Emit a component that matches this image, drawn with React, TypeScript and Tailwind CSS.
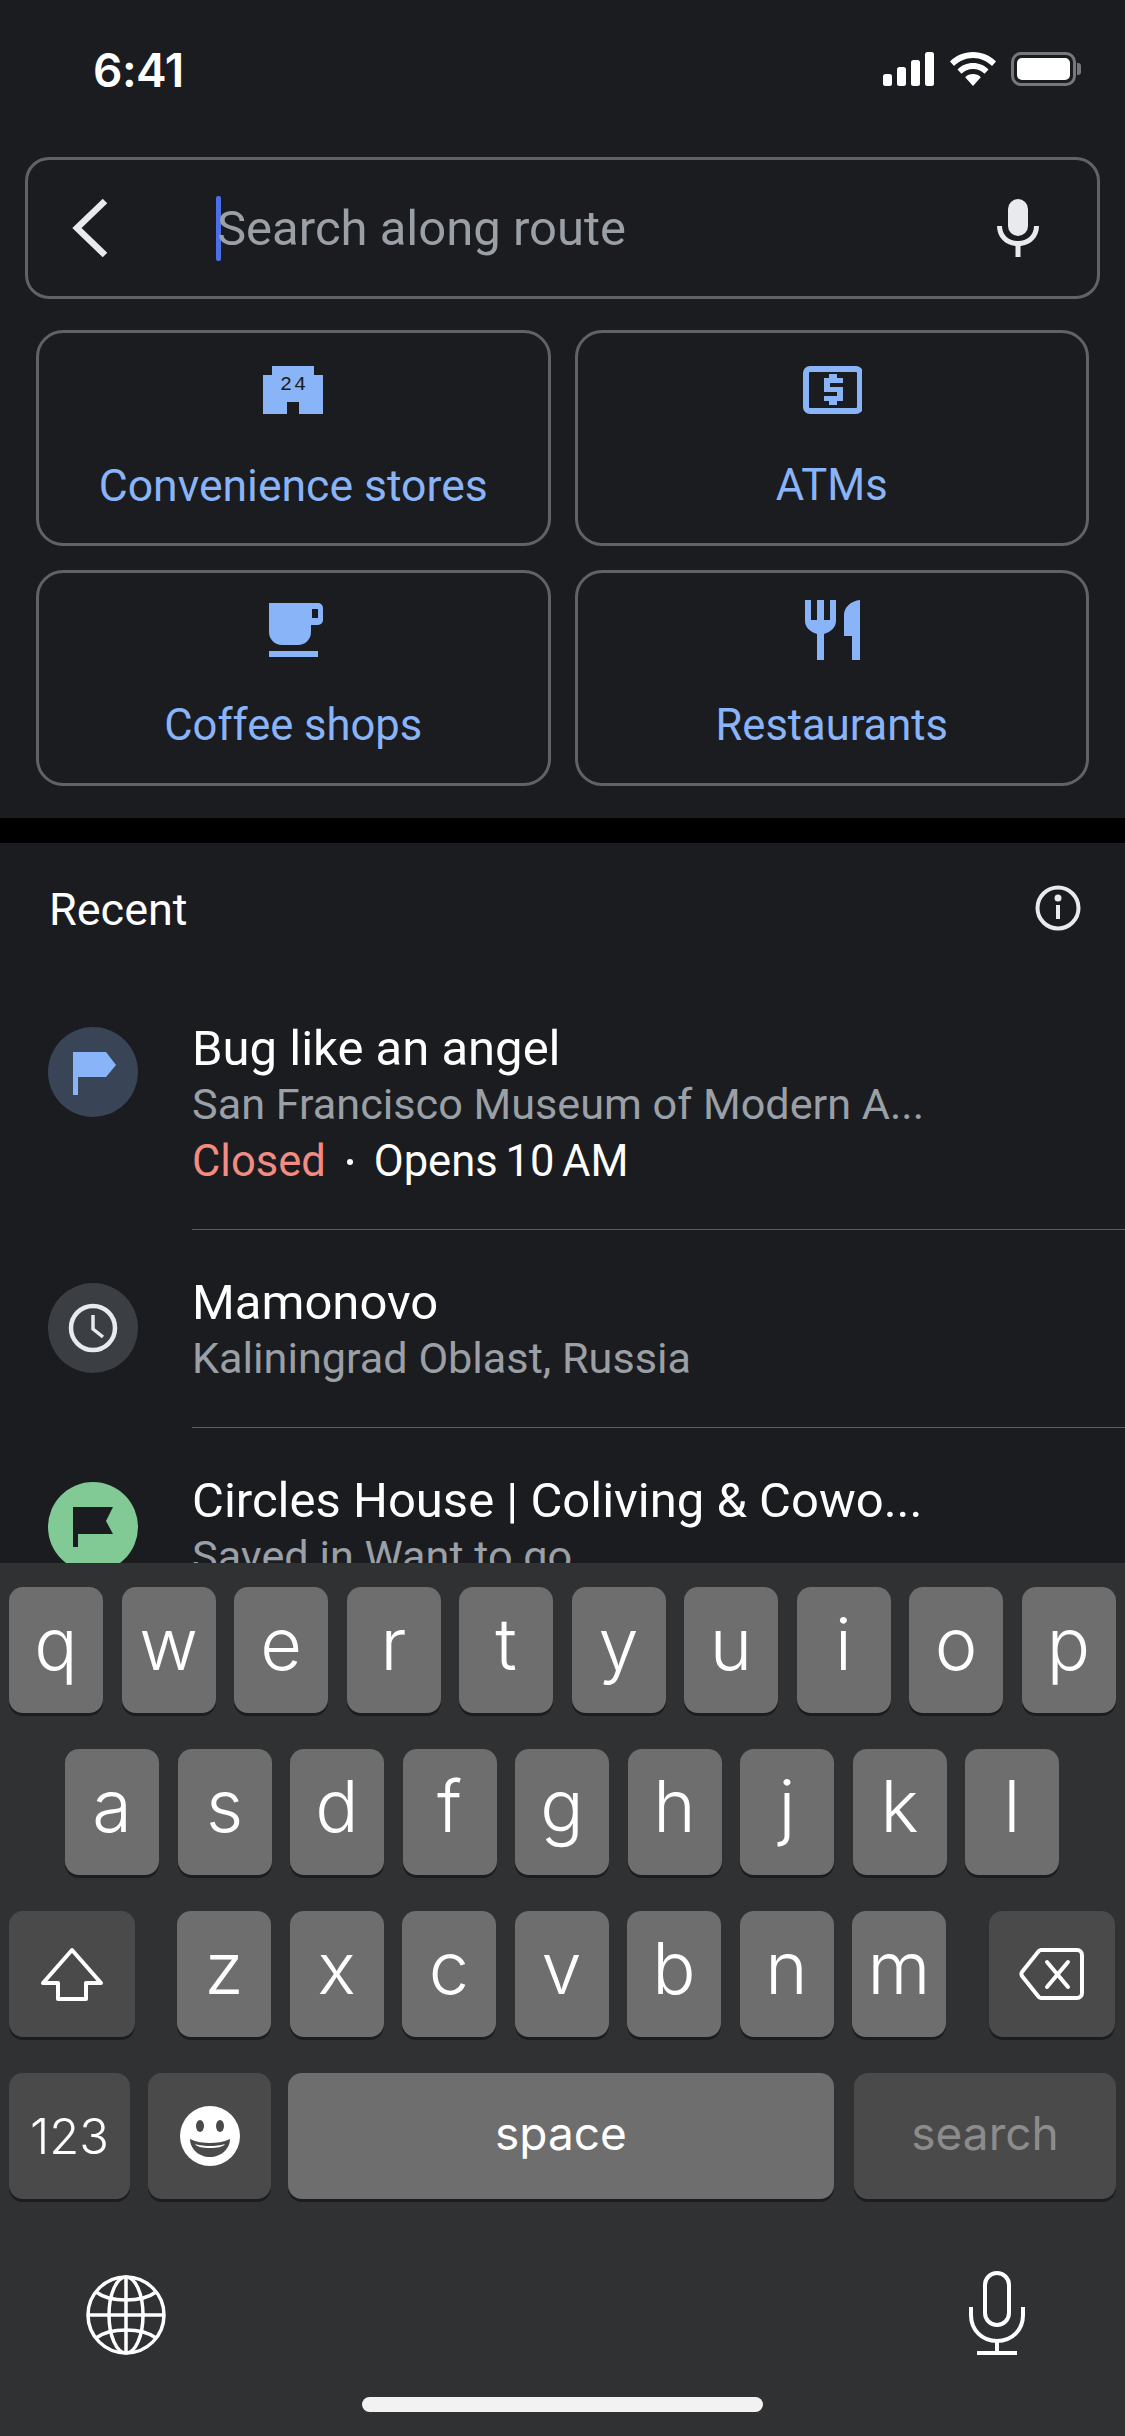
import React from "react";

const Key = ({ c, w = "w-[94px]", dark = false, children }: { c?: string; w?: string; dark?: boolean; children?: React.ReactNode }) => (
  <div className={`${w} h-[126px] shrink-0 rounded-[14px] flex items-center justify-center text-white shadow-[0_3px_0_#1d1d1f] ${dark ? "bg-[#4a4a4a]" : "bg-[#6e6e6e]"}`}>
    {c ? <span className="text-[72px] font-light leading-none pb-[12px]">{c}</span> : children}
  </div>
);

const Chip = ({ label, wide, children }: { label: string; wide?: boolean; children: React.ReactNode }) => (
  <div className="h-[216px] rounded-[27px] border-[3px] border-[#5f6368] flex flex-col items-center pt-[27px]">
    {children}
    <div className={`mt-[42px] leading-[48px] text-[#8ab4f8] font-['Roboto',sans-serif] ${wide ? "text-[44.500px]" : "text-[43.500px]"}`}>{label}</div>
  </div>
);

const Item = ({ icon, mt, pt, pb, last, children }: { icon: React.ReactNode; mt: string; pt: string; pb: string; last?: boolean; children: React.ReactNode }) => (
  <div className="flex">
    <div className={`w-[192px] shrink-0 pl-[48px] ${pt}`}>
      <div className={mt}>{icon}</div>
    </div>
    <div className={`flex-1 ${pt} ${pb} ${last ? "" : "border-b-[1.5px] border-[#5a5c60]"}`}>{children}</div>
  </div>
);

const Title = ({ t }: { t: string }) => <div className="text-[49px] leading-[56px] text-white">{t}</div>;
const Sub = ({ t }: { t: string }) => <div className="text-[43.200px] leading-[56px] text-[#9aa0a6]">{t}</div>;

export default function App() {
  return (
    <div className="w-[1125px] h-[2436px] overflow-hidden flex flex-col bg-black font-['Roboto',sans-serif]">
      <div className="h-[818px] shrink-0 bg-[#1b1c20]">
        <div className="h-[157px] flex items-start justify-between pt-[44px] pl-[93px] pr-[44px]">
          <span className="text-white text-[46px] leading-[52px] font-semibold font-['Inter',sans-serif] tracking-[-0.5px]">6:41</span>
          <div className="flex items-center gap-[15px] pt-[8px]">
            <svg width="52" height="34" viewBox="0 0 52 34" fill="#fff">
              <rect x="0" y="22" width="9" height="12" rx="2.500" />
              <rect x="14" y="15" width="9" height="19" rx="2.500" />
              <rect x="28" y="8" width="9" height="26" rx="2.500" />
              <rect x="42" y="0" width="9" height="34" rx="2.500" />
            </svg>
            <svg width="46" height="34" viewBox="0 0 46 34" fill="#fff">
              <path d="M23 0C14 0 6 3.500 0 9.500l4 4.500C9 9 15.600 6 23 6s14 3 19 8l4-4.500C40 3.500 32 0 23 0z" />
              <path d="M23 11c-6 0-11.500 2.400-15.500 6.400l4 4.400C14.500 19 18.500 17 23 17s8.500 2 11.500 4.800l4-4.400C34.500 13.400 29 11 23 11z" />
              <path d="M23 22c-3 0-5.800 1.200-7.800 3.200L23 34l7.800-8.800C28.800 23.200 26 22 23 22z" />
            </svg>
            <div className="flex items-center">
              <div className="w-[65px] h-[34px] rounded-[10px] border-[3px] border-[#77787a] p-[3px]">
                <div className="w-full h-full bg-white rounded-[5px]" />
              </div>
              <div className="w-[4px] h-[12px] ml-[1px] rounded-r-[3px] bg-[#77787a]" />
            </div>
          </div>
        </div>

        <div className="mx-[25px] h-[142px] rounded-[24px] border-[3px] border-[#5f6368] flex items-center pl-[44px] pr-[58px]">
          <svg width="36" height="60" viewBox="0 0 36 60" fill="none" stroke="#e8eaed" strokeWidth="6.500">
            <path d="M33 3 5 30l28 27" />
          </svg>
          <div className="w-[5px] h-[65px] ml-[108px] bg-[#4a6fe8] rounded-[2px] shrink-0" />
          <div className="flex-1 text-[#9aa0a6] text-[49px] leading-[60px] -ml-[4px] pt-[2px]">Search along route</div>
          <svg width="42" height="58" viewBox="0 0 42 58" fill="#e8eaed">
            <rect x="11" y="0" width="20" height="37" rx="10" />
            <path d="M0 27h5c0 9 7 15 16 15s16-6 16-15h5c0 11-8 19-18.500 20v11h-5V47C8 46 0 38 0 27z" />
          </svg>
        </div>

        <div className="grid grid-cols-2 gap-x-[24px] gap-y-[24px] px-[36px] mt-[31px]">
          <Chip label="Convenience stores" wide>
            <svg width="60" height="60" viewBox="0 0 60 60">
              <path fill="#8ab4f8" d="M9 6h42v9h9v39H36V42H24v12H0V15h9z" />
              <text x="17" y="30" fontSize="20" fontFamily="Liberation Mono, monospace" letterSpacing="2" fill="#1b1c20">24</text>
            </svg>
          </Chip>
          <Chip label="ATMs">
            <svg width="60" height="60" viewBox="0 0 60 60">
              <rect x="4" y="9" width="54" height="42" rx="4" fill="none" stroke="#8ab4f8" strokeWidth="6" />
              <path fill="#8ab4f8" d="M27 14h8v4h6v5H28v4h13v14h-6v4h-8v-4h-5v-5h13v-4H22V18h5z" />
            </svg>
          </Chip>
          <Chip label="Coffee shops">
            <svg width="60" height="60" viewBox="0 0 60 60">
              <path fill="#8ab4f8" d="M6 3h49a5 5 0 0 1 5 5v12a5 5 0 0 1-5 5h-7v7a13 13 0 0 1-13 13H19A13 13 0 0 1 6 32z" />
              <rect x="49" y="9" width="6" height="9" fill="#1b1c20" />
              <rect x="6" y="51" width="49" height="6" fill="#8ab4f8" />
            </svg>
          </Chip>
          <Chip label="Restaurants">
            <svg width="60" height="60" viewBox="0 0 60 60">
              <path fill="#8ab4f8" d="M3 0h6v20h6V0h7v20h6V0h6v21c0 6-5 11-12 13v26h-7V34C8 32 3 27 3 21z" />
              <path fill="#8ab4f8" d="M58 0v60h-8V36h-8V15C42 7 49 1 58 0z" />
            </svg>
          </Chip>
        </div>
      </div>

      <div className="h-[25px] shrink-0 bg-black" />

      <div className="flex-1 min-h-0 overflow-hidden bg-[#1b1c20]">
        <div className="h-[134px] flex items-start justify-between pl-[49px] pr-[44px] pt-[39px]">
          <span className="text-white text-[45px] leading-[56px]">Recent</span>
          <svg width="46" height="46" viewBox="0 0 46 46" fill="none" stroke="#e8eaed" strokeWidth="4" className="mt-[3px]">
            <circle cx="23" cy="23" r="20.500" />
            <path d="M23 20v14" />
            <circle cx="23" cy="13" r="1.500" fill="#e8eaed" />
          </svg>
        </div>

        <Item
          pt="pt-[44px]"
          pb="pb-[39px]"
          mt="mt-[6px]"
          icon={
            <div className="w-[90px] h-[90px] rounded-full bg-[#394457] flex items-center justify-center">
              <svg width="46" height="46" viewBox="0 0 46 46" fill="#8ab4f8">
                <path d="M3 3h33l10 13-10 12H8v18H3z" />
              </svg>
            </div>
          }
        >
          <Title t="Bug like an angel" />
          <Sub t="San Francisco Museum of Modern A..." />
          <div className="text-[43.500px] leading-[56px] text-white flex items-center pt-[1px]">
            <span className="text-[#f28b82]">Closed</span>
            <span className="w-[6px] h-[6px] rounded-full bg-white mx-[21px]" />
            <span className="[word-spacing:-3px]">Opens 10 AM</span>
          </div>
        </Item>

        <Item
          pt="pt-[45px]"
          pb="pb-[40px]"
          mt="mt-[8px]"
          icon={
            <div className="w-[90px] h-[90px] rounded-full bg-[#3b3e42] flex items-center justify-center">
              <svg width="50" height="50" viewBox="0 0 50 50" fill="none" stroke="#e8eaed" strokeWidth="4.500">
                <circle cx="25" cy="25" r="22" />
                <path d="M25 12v14l10 8" strokeWidth="3.500" />
              </svg>
            </div>
          }
        >
          <Title t="Mamonovo" />
          <Sub t="Kaliningrad Oblast, Russia" />
        </Item>

        <Item
          last
          pt="pt-[45px]"
          pb="pb-[40px]"
          mt="mt-[9px]"
          icon={
            <div className="w-[90px] h-[90px] rounded-full bg-[#81c995] flex items-center justify-center">
              <svg width="46" height="46" viewBox="0 0 46 46" fill="#1b1c20">
                <path d="M3 3h40l-7 14 7 13H8v13H3z" />
              </svg>
            </div>
          }
        >
          <Title t="Circles House | Coliving & Cowo..." />
          <Sub t="Saved in Want to go" />
        </Item>
      </div>

      <div className="h-[873px] shrink-0 bg-[#303132] pt-[24px] flex flex-col font-['Inter',sans-serif]">
        <div className="flex gap-[18.5px] pl-[9px]">
          {["q", "w", "e", "r", "t", "y", "u", "i", "o", "p"].map((k) => (
            <Key key={k} c={k} />
          ))}
        </div>
        <div className="flex gap-[18.5px] pl-[65px] mt-[36px]">
          {["a", "s", "d", "f", "g", "h", "j", "k", "l"].map((k) => (
            <Key key={k} c={k} />
          ))}
        </div>
        <div className="flex pl-[9px] mt-[36px]">
          <Key w="w-[126px]" dark>
            <svg width="64" height="54" viewBox="0 0 64 54" fill="none" stroke="#fff" strokeWidth="4" strokeLinejoin="round">
              <path d="M32 3 3 36h15v16h28V36h15z" />
            </svg>
          </Key>
          <div className="flex gap-[18.5px] ml-[42px]">
            {["z", "x", "c", "v", "b", "n", "m"].map((k) => (
              <Key key={k} c={k} />
            ))}
          </div>
          <div className="ml-[43px]">
            <Key w="w-[126px]" dark>
              <svg width="66" height="54" viewBox="0 0 66 54" fill="none" stroke="#fff" strokeWidth="4" strokeLinejoin="round" strokeLinecap="round">
                <path d="M22 3h36a5 5 0 0 1 5 5v38a5 5 0 0 1-5 5H22a4 4 0 0 1-3-2L3 29a4 4 0 0 1 0-4L19 5a4 4 0 0 1 3-2z" />
                <path d="M28 15l21 25M49 15 28 40" />
              </svg>
            </Key>
          </div>
        </div>
        <div className="flex pl-[9px] mt-[36px]">
          <Key w="w-[121px]" dark>
            <span className="text-[49px] font-light leading-none">123</span>
          </Key>
          <div className="ml-[18px]">
            <Key w="w-[123px]" dark>
              <svg width="60" height="60" viewBox="0 0 60 60">
                <circle cx="30" cy="30" r="30" fill="#fff" />
                <ellipse cx="20" cy="20" rx="4" ry="6" fill="#4a4a4a" />
                <ellipse cx="40" cy="20" rx="4" ry="6" fill="#4a4a4a" />
                <path d="M10 33c6 3 14 4 20 4s14-1 20-4c0 10-9 18-20 18S10 43 10 33z" fill="#4a4a4a" />
                <path d="M15 38c5 1.500 10 2 15 2s10-.5 15-2c-2 3-8 4-15 4s-13-1-15-4z" fill="#fff" />
              </svg>
            </Key>
          </div>
          <div className="ml-[17px]">
            <Key w="w-[546px]">
              <span className="text-[46px] leading-none pb-[6px]">space</span>
            </Key>
          </div>
          <div className="ml-[20px]">
            <Key w="w-[262px]" dark>
              <span className="text-[46px] leading-none pb-[6px] text-[#8c8c8c]">search</span>
            </Key>
          </div>
        </div>

        <div className="flex items-center justify-between h-[84px] mt-[72px] pl-[86px] pr-[100px]">
          <svg width="80" height="80" viewBox="0 0 80 80" fill="none" stroke="#fff" strokeWidth="3.500" className="mt-[4px]">
            <circle cx="40" cy="40" r="38" />
            <ellipse cx="40" cy="40" rx="17" ry="38" />
            <path d="M40 2v76M2 40h76" />
            <path d="M10 17c8 6 18 8 30 8s22-2 30-8M10 63c8-6 18-8 30-8s22 2 30 8" />
          </svg>
          <svg width="56" height="84" viewBox="0 0 56 84" fill="none" stroke="#fff" strokeWidth="4">
            <rect x="16" y="2" width="24" height="52" rx="12" />
            <path d="M2 36v8c0 15 11 26 26 26s26-11 26-26v-8" />
            <path d="M28 70v12M8 82h40" />
          </svg>
        </div>

        <div className="mt-[42px] mx-auto w-[401px] h-[15px] rounded-full bg-[#f2f2f2]" />
      </div>
    </div>
  );
}
